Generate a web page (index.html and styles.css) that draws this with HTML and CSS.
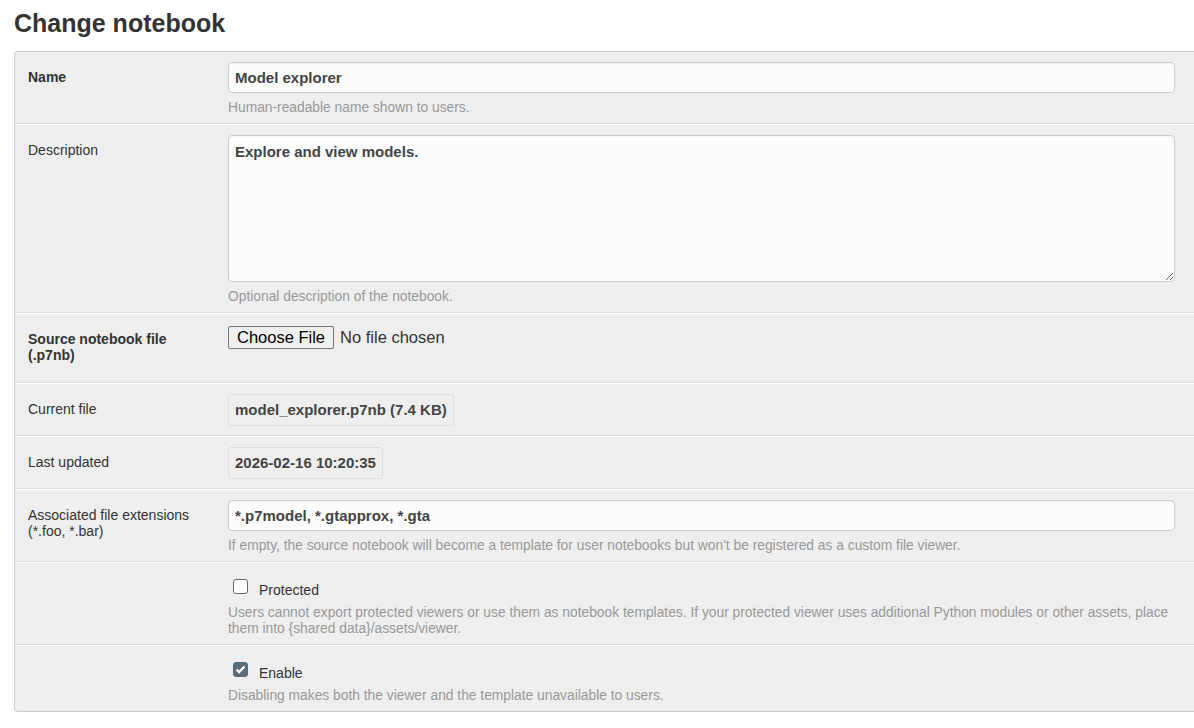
FILE: index.html
```html
<!DOCTYPE html>
<html lang="en">
<head>
    <meta charset="UTF-8">
    <meta name="viewport" content="width=device-width, initial-scale=1.0">
    <title>Change notebook</title>
    <link rel="stylesheet" href="styles.css">
</head>
<body>
    <h1>Change notebook</h1>
    <form class="change-form">
        <fieldset class="module">
            <div class="form-row">
                <label class="row-label required" for="id_name">Name</label>
                <div class="row-field">
                    <input type="text" id="id_name" class="text-input" value="Model explorer">
                    <div class="help">Human-readable name shown to users.</div>
                </div>
            </div>
            <div class="form-row">
                <label class="row-label" for="id_description">Description</label>
                <div class="row-field">
                    <textarea id="id_description" class="text-area">Explore and view models.</textarea>
                    <div class="help">Optional description of the notebook.</div>
                </div>
            </div>
            <div class="form-row file-row">
                <label class="row-label required" for="id_source">Source notebook file (.p7nb)</label>
                <div class="row-field">
                    <input type="file" id="id_source" class="file-input">
                </div>
            </div>
            <div class="form-row">
                <div class="row-label">Current file</div>
                <div class="row-field">
                    <div class="readonly">model_explorer.p7nb (7.4 KB)</div>
                </div>
            </div>
            <div class="form-row">
                <div class="row-label">Last updated</div>
                <div class="row-field">
                    <div class="readonly">2026-02-16 10:20:35</div>
                </div>
            </div>
            <div class="form-row">
                <label class="row-label" for="id_ext">Associated file extensions (*.foo, *.bar)</label>
                <div class="row-field">
                    <input type="text" id="id_ext" class="text-input" value="*.p7model, *.gtapprox, *.gta">
                    <div class="help">If empty, the source notebook will become a template for user notebooks but won't be registered as a custom file viewer.</div>
                </div>
            </div>
            <div class="form-row">
                <div class="row-label"></div>
                <div class="row-field">
                    <div class="check-line">
                        <input type="checkbox" id="id_protected" class="check">
                        <label for="id_protected">Protected</label>
                    </div>
                    <div class="help help-check">Users cannot export protected viewers or use them as notebook templates. If your protected viewer uses additional Python modules or other assets, place them into {shared data}/assets/viewer.</div>
                </div>
            </div>
            <div class="form-row">
                <div class="row-label"></div>
                <div class="row-field">
                    <div class="check-line">
                        <input type="checkbox" id="id_enable" class="check" checked>
                        <label for="id_enable">Enable</label>
                    </div>
                    <div class="help help-check">Disabling makes both the viewer and the template unavailable to users.</div>
                </div>
            </div>
        </fieldset>
    </form>
</body>
</html>
```

FILE: styles.css
```css
body {
    font-family: 'Liberation Sans', Arial, sans-serif;
    font-size: 14px;
    color: #333;
    margin: 0;
    padding: 8px 0 0 14px;
    background: #fff;
    overflow-x: hidden;
}

h1 {
    font-size: 25px;
    font-weight: bold;
    color: #333;
    margin: 0 0 13px;
    line-height: 30px;
}

.change-form {
    margin: 0;
}

.module {
    margin: 0;
    padding: 0;
    width: 1200px;
    border: 1px solid #ccc;
    border-radius: 4px;
    background: #eee;
}

.form-row {
    display: grid;
    grid-template-columns: 200px 947px;
    padding: 10px 13px 9px;
    border-top: 1px solid #fff;
    border-bottom: 1px solid #ddd;
}

.form-row:first-child {
    border-top: none;
}

.form-row:last-child {
    border-bottom: none;
}

.file-row {
    padding-bottom: 19px;
}

.row-label {
    padding-top: 7px;
    padding-right: 20px;
    line-height: 16px;
    color: #333;
}

.row-label.required {
    font-weight: bold;
}

.text-input,
.text-area {
    display: block;
    box-sizing: border-box;
    width: 100%;
    font-family: inherit;
    font-size: 15px;
    font-weight: bold;
    color: #444;
    background: #fcfcfc;
    border: 1px solid #ccc;
    border-radius: 4px;
    box-shadow: inset 0 1px 2px rgba(0, 0, 0, 0.05);
    margin: 0;
}

.text-input {
    height: 31px;
    padding: 5px 6px;
}

.text-area {
    height: 147px;
    padding: 7px 6px;
    resize: vertical;
}

/* help text sits a little low; the negative bottom margin keeps row heights */
.help {
    margin: 7px 0 -2px;
    font-size: 13.8px;
    line-height: 16px;
    color: #999;
}

.help-check {
    margin-top: 5px;
}

.file-input {
    font-family: inherit;
    font-size: 16.5px;
    color: #333;
    margin: 2px 0 0;
}

.file-input::file-selector-button {
    font-family: inherit;
    font-size: 16.5px;
    color: #000;
    background: #efefef;
    border: 1px solid #767676;
    border-radius: 2px;
    padding: 1px 8px;
    margin-right: 6px;
}

.readonly {
    display: inline-block;
    padding: 7px 6px;
    line-height: 16px;
    font-size: 15px;
    font-weight: bold;
    color: #444;
    border: 1px dotted #ccc;
    border-radius: 4px;
}

.check-line {
    display: flex;
    align-items: center;
    height: 27px;
    padding-left: 5px;
}

.check-line label {
    margin-left: 11px;
    padding-top: 7px;
    color: #333;
}

.check {
    appearance: none;
    -webkit-appearance: none;
    width: 15px;
    height: 15px;
    margin: 0;
    box-sizing: border-box;
    border: 1px solid #666;
    border-radius: 3px;
    background: #fff;
}

.check:checked {
    border-color: #5b6b79;
    background: #5b6b79 url("data:image/svg+xml,%3Csvg xmlns='http://www.w3.org/2000/svg' viewBox='0 0 15 15'%3E%3Cpath d='M3.5 7.5l2.6 2.6 5.4-5.6' fill='none' stroke='%23fff' stroke-width='2.2'/%3E%3C/svg%3E") center / 15px 15px no-repeat;
}
```
